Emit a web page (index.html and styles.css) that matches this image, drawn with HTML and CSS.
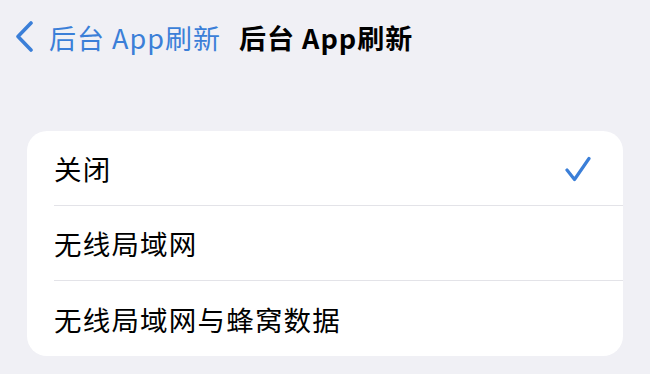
FILE: index.html
```html
<!DOCTYPE html>
<html lang="zh-CN">
<head>
  <meta charset="UTF-8">
  <meta name="viewport" content="width=device-width, initial-scale=1.0">
  <title>后台 App刷新</title>
  <link rel="stylesheet" href="styles.css">
</head>
<body>
  <div class="nav">
    <a class="back" href="#">
      <svg class="chevron" width="20" height="32" viewBox="0 0 20 32">
        <path d="M17 2 L4 15.5 L17 29" fill="none" stroke="#3b7fd8" stroke-width="3.6" stroke-linecap="round" stroke-linejoin="round"/>
      </svg>
      <span class="back-label">后台 App刷新</span>
    </a>
    <div class="nav-title">后台 App刷新</div>
  </div>

  <div class="group">
    <div class="row">
      <span class="row-label">关闭</span>
      <svg class="check" width="26" height="26" viewBox="0 0 26 26">
        <path d="M2 14 L9.5 23.5 L24 2.5" fill="none" stroke="#3b7fd8" stroke-width="3.2" stroke-linecap="round" stroke-linejoin="round"/>
      </svg>
    </div>
    <div class="row">
      <span class="row-label">无线局域网</span>
    </div>
    <div class="row">
      <span class="row-label">无线局域网与蜂窝数据</span>
    </div>
  </div>
</body>
</html>
```

FILE: styles.css
```css
* {
  margin: 0;
  padding: 0;
  box-sizing: border-box;
}

body {
  width: 650px;
  height: 374px;
  background-color: #f0f0f5;
  font-family: "Noto Sans CJK SC", "Noto Sans", sans-serif;
  color: #000;
  overflow: hidden;
}

.nav {
  display: flex;
  align-items: center;
  height: 74px;
  padding-left: 14px;
}

.back {
  display: flex;
  align-items: center;
  text-decoration: none;
  color: #3b7fd8;
}

.chevron {
  margin-right: 15px;
}

.back-label {
  font-size: 27px;
  letter-spacing: 1px;
}

.nav-title {
  margin-left: 18px;
  font-size: 27px;
  font-weight: bold;
  letter-spacing: 1px;
}

.group {
  margin: 57px 27px 0 27px;
  background-color: #fff;
  border-radius: 20px;
  overflow: hidden;
}

.row {
  display: flex;
  align-items: center;
  justify-content: space-between;
  height: 75px;
  margin-left: 27px;
  padding-right: 32px;
  border-bottom: 1px solid #e3e3e8;
}

.row:last-child {
  border-bottom: none;
}

.row-label {
  font-size: 27.5px;
  letter-spacing: 1.2px;
}

.check {
  margin-top: 2px;
}
```
